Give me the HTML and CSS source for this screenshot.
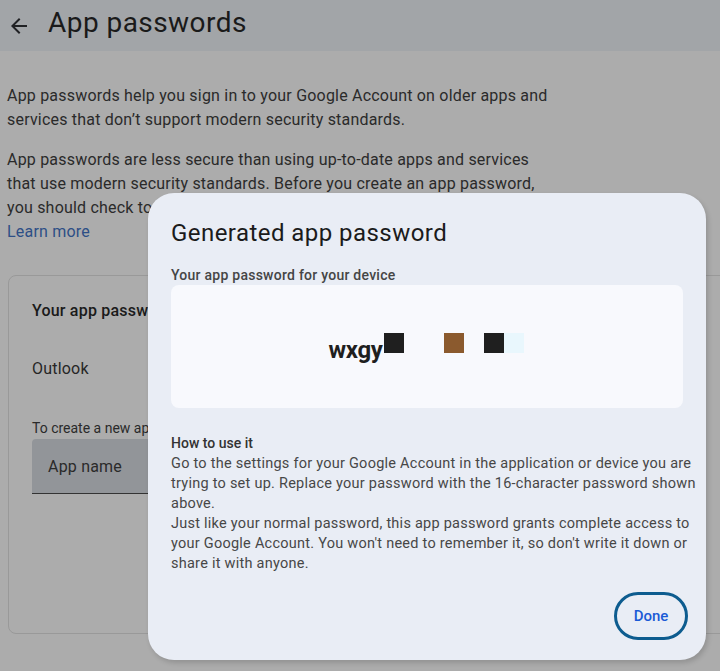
FILE: index.html
```html
<!DOCTYPE html>
<html lang="en">
<head>
<meta charset="utf-8">
<title>App passwords</title>
<link rel="stylesheet" href="styles.css">
</head>
<body>
<header class="topbar">
  <svg class="back" width="24" height="24" viewBox="0 0 24 24"><path d="M20 11H7.83l5.59-5.59L12 4l-8 8 8 8 1.41-1.41L7.83 13H20v-2z" fill="#202124"/></svg>
  <h1 class="title">App passwords</h1>
</header>
<main class="content">
  <p class="para">App passwords help you sign in to your Google Account on older apps and services that don’t support modern security standards.</p>
  <p class="para">App passwords are less secure than using up-to-date apps and services that use modern security standards. Before you create an app password, you should check to see if your app needs this in order to sign in.<br><a class="link" href="#">Learn more</a></p>
  <section class="card">
    <div class="card-title">Your app passwords</div>
    <div class="card-item">Outlook</div>
    <div class="card-hint">To create a new app specific password, type a name for it below...</div>
    <div class="field">App name</div>
  </section>
</main>
<div class="dialog">
  <h2 class="dlg-title">Generated app password</h2>
  <div class="dlg-label">Your app password for your device</div>
  <div class="pwbox">
    <span class="pw">wxgy</span><span class="sq dark"></span><span class="sq gap2"></span><span class="sq brown"></span><span class="sq gap"></span><span class="sq dark"></span><span class="sq light"></span>
  </div>
  <div class="how">
    <div class="how-title">How to use it</div>
    <p class="how-text">Go to the settings for your Google Account in the application or device you are trying to set up. Replace your password with the 16-character password shown above.<br>Just like your normal password, this app password grants complete access to your Google Account. You won't need to remember it, so don't write it down or share it with anyone.</p>
  </div>
  <div class="actions"><button class="done">Done</button></div>
</div>
</body>
</html>
```
FILE: styles.css
```css
html, body {
  margin: 0;
  padding: 0;
}
body {
  background: #acacac;
  font-family: Roboto, "Liberation Sans", sans-serif;
  color: #262626;
  width: 720px;
  height: 671px;
  overflow: hidden;
  position: relative;
  letter-spacing: 0.2px;
}
.topbar {
  height: 51px;
  background: #a2a5a8;
  display: flex;
  align-items: center;
  padding-left: 7px;
  box-sizing: border-box;
}
.back {
  margin-right: 17px;
}
.title {
  margin: 0;
  font-weight: 400;
  font-size: 28px;
  color: #1a1a1a;
  letter-spacing: 0.45px;
  padding-bottom: 6px;
}
.content {
  padding: 33px 8px 0 7px;
}
.para {
  margin: 0 0 16px 0;
  font-size: 16px;
  line-height: 24px;
  color: #2a2a2a;
  width: 548px;
}
.link {
  color: #2d4f86;
  text-decoration: none;
}
.card {
  margin: 31px 0 0 1px;
  width: 720px;
  height: 359px;
  border: 1px solid #999;
  border-radius: 8px;
  box-sizing: border-box;
  padding: 24px 0 0 23px;
}
.card-title {
  font-size: 16px;
  font-weight: 500;
  color: #1a1a1a;
  line-height: 22px;
}
.card-item {
  font-size: 16px;
  margin-top: 36px;
  line-height: 22px;
}
.card-hint {
  font-size: 14px;
  margin-top: 39px;
  line-height: 18px;
  color: #2a2a2a;
  white-space: nowrap;
  letter-spacing: 0;
}
.field {
  margin-top: 2px;
  height: 55px;
  width: 400px;
  background: #929599;
  border-bottom: 1px solid #333;
  border-radius: 4px 4px 0 0;
  box-sizing: border-box;
  padding-left: 16px;
  display: flex;
  align-items: center;
  font-size: 16px;
  color: #2a2a2a;
}
.dialog {
  position: absolute;
  left: 148px;
  top: 193px;
  width: 558px;
  height: 467px;
  background: #e9edf5;
  border-radius: 26px;
  box-sizing: border-box;
  padding: 24px 23px 0 23px;
  box-shadow: 2px 3px 5px rgba(0,0,0,0.15);
}
.dlg-title {
  margin: 0;
  font-weight: 400;
  font-size: 24px;
  line-height: 32px;
  color: #1b1b1b;
  letter-spacing: 0.45px;
}
.dlg-label {
  margin-top: 17px;
  font-size: 14px;
  font-weight: 500;
  color: #454545;
  line-height: 18px;
  letter-spacing: 0.25px;
}
.pwbox {
  margin-top: 1px;
  height: 123px;
  background: #f8f9fd;
  border-radius: 8px;
  display: flex;
  align-items: center;
  justify-content: center;
  padding-bottom: 7px;
  padding-right: 2px;
  box-sizing: border-box;
}
.pw {
  font-size: 24px;
  font-weight: 700;
  color: #1f1f1f;
  letter-spacing: -0.3px;
  margin-top: 13px;
  margin-right: 1px;
}
.sq {
  display: inline-block;
  width: 20px;
  height: 20px;
}
.sq.gap { width: 20px; }
.sq.gap2 { width: 40px; }
.sq.dark { background: #1f1f1f; }
.sq.brown { background: #8b5a2e; }
.sq.light { background: #e9f7fd; }
.how {
  margin-top: 26px;
  margin-right: -16px;
}
.how-title {
  font-size: 14px;
  font-weight: 500;
  color: #333;
  line-height: 18px;
  letter-spacing: 0;
}
.how-text {
  margin: 2px 0 0 0;
  font-size: 14.5px;
  line-height: 20px;
  color: #474747;
  letter-spacing: 0.25px;
}
.actions {
  display: flex;
  justify-content: flex-end;
  margin-top: 18px;
  margin-right: -5px;
}
.done {
  width: 74px;
  height: 48px;
  border: 3px solid #0d5c8f;
  border-radius: 24px;
  background: transparent;
  color: #1a5ad6;
  font-family: Roboto, "Liberation Sans", sans-serif;
  font-size: 15px;
  font-weight: 500;
  padding: 0;
}
```
